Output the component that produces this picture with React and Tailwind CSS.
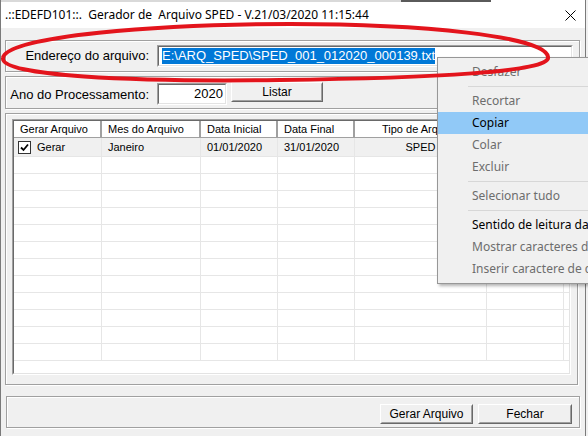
import React from 'react';

const arial = "font-['Liberation_Sans',Arial,sans-serif]";
const segoe = "font-['Noto_Sans','Open_Sans',sans-serif]";

const columns = [
  { w: 'w-[88px]', title: 'Gerar Arquivo' },
  { w: 'w-[99px]', title: 'Mes do Arquivo' },
  { w: 'w-[77px]', title: 'Data Inicial' },
  { w: 'w-[77px]', title: 'Data Final' },
  { w: 'w-[132px]', title: 'Tipo de Arquivo', center: true },
  { w: 'w-[77px]', title: '' },
  { w: 'w-[20px]', title: '' },
];

const menuItems = [
  { label: 'Desfazer', disabled: true },
  { sep: true },
  { label: 'Recortar', disabled: true },
  { label: 'Copiar', active: true },
  { label: 'Colar', disabled: true },
  { label: 'Excluir', disabled: true },
  { sep: true },
  { label: 'Selecionar tudo', disabled: true },
  { sep: true },
  { label: 'Sentido de leitura da direita para a esquerda' },
  { label: 'Mostrar caracteres de controle Unicode', disabled: true },
  { label: 'Inserir caractere de controle Unicode', disabled: true },
];

function Sunken({ className = '', children }) {
  return (
    <div className={`border border-t-[#a0a0a0] border-l-[#a0a0a0] border-r-white border-b-white ${className}`}>
      <div className="h-full w-full border border-t-[#696969] border-l-[#696969] border-r-[#e3e3e3] border-b-[#e3e3e3] bg-white overflow-hidden">
        {children}
      </div>
    </div>
  );
}

function Btn({ className = '', children }) {
  return (
    <div className={`border border-t-white border-l-white border-r-[#696969] border-b-[#696969] bg-[#f0f0f0] ${className}`}>
      <div className={`h-full w-full border border-t-[#f0f0f0] border-l-[#f0f0f0] border-r-[#a0a0a0] border-b-[#a0a0a0] flex items-center justify-center text-[12px] text-black ${arial}`}>
        {children}
      </div>
    </div>
  );
}

function Panel({ className = '', children }) {
  return (
    <div className={`border border-[#a0a0a0] shadow-[inset_1px_1px_0_#fff,1px_1px_0_#fff] ${className}`}>
      {children}
    </div>
  );
}

function Grid() {
  const rows = Array.from({ length: 13 });
  return (
    <Sunken className="ml-[6px] mt-[5px] w-[559px] h-[256px]">
      <div className={`flex h-[17px] border-b border-[#a0a0a0] bg-white text-[11px] text-black ${arial}`}>
        {columns.map((c, i) => (
          <div
            key={i}
            className={`${c.w} shrink-0 h-full flex items-center px-[6px] border-r-2 border-r-[#a0a0a0] whitespace-nowrap overflow-hidden ${c.center ? 'justify-center' : ''}`}
          >
            {c.title}
          </div>
        ))}
      </div>
      {rows.map((_, r) => (
        <div
          key={r}
          className={`flex border-b border-[#e6e6e6] text-[11px] text-black ${arial} ${r === 0 ? 'h-[19px] bg-[#f0f0f0]' : 'h-[17px] bg-white'}`}
        >
          {columns.map((c, i) => (
            <div
              key={i}
              className={`${c.w} shrink-0 h-full flex items-center border-r border-[#e6e6e6] whitespace-nowrap overflow-hidden ${c.center ? 'justify-center' : 'px-[5px]'}`}
            >
              {r === 0 && i === 0 && (
                <div className="flex items-center gap-[6px] -ml-[1px]">
                  <span className="w-[13px] h-[13px] border border-[#333] bg-white flex items-center justify-center">
                    <svg width="9" height="9" viewBox="0 0 9 9">
                      <path d="M1 4.5 L3.5 7 L8 1.5" stroke="#000" strokeWidth="1.8" fill="none" />
                    </svg>
                  </span>
                  <span>Gerar</span>
                </div>
              )}
              {r === 0 && i === 1 && <span className="pl-[1px]">Janeiro</span>}
              {r === 0 && i === 2 && <span className="pl-[1px]">01/01/2020</span>}
              {r === 0 && i === 3 && <span className="pl-[1px]">31/01/2020</span>}
              {r === 0 && i === 4 && <span>SPED</span>}
            </div>
          ))}
        </div>
      ))}
    </Sunken>
  );
}

function ContextMenu() {
  return (
    <div className={`absolute left-[437px] top-[57px] w-[170px] h-[227px] bg-[#f0f0f0] border border-[#979797] shadow-[2px_2px_3px_rgba(0,0,0,0.3)] pt-[3px] text-[12px] ${segoe}`}>
      {menuItems.map((m, i) =>
        m.sep ? (
          <div key={i} className="h-[7px] flex items-center pl-[30px]">
            <div className="h-px w-full bg-[#d7d7d7]" />
          </div>
        ) : (
          <div
            key={i}
            className={`h-[22px] flex items-center pl-[34px] whitespace-nowrap ${m.active ? 'bg-[#91c9f7]' : ''} ${m.disabled ? 'text-[#6d6d6d]' : 'text-black'}`}
          >
            {m.label}
          </div>
        )
      )}
    </div>
  );
}

export default function App() {
  return (
    <div className="relative w-[588px] h-[436px] overflow-hidden bg-[#f0f0f0]">
      <div className="w-[586px] h-full flex flex-col border-l border-r border-[#7a7a7a] bg-[#f0f0f0]">
        <div className="flex h-[2px]">
          <div className="w-[400px] bg-[#d9d9d9]" />
          <div className="w-[90px] bg-[#5a5a5a]" />
          <div className="flex-1 bg-white" />
        </div>
        {/* title bar */}
        <div className={`h-[26px] bg-white flex items-center justify-between pl-[4px] pr-[9px] text-[12px] text-black ${segoe}`}>
          <span className="whitespace-pre">.::EDEFD101::.  Gerador de  Arquivo SPED - V.21/03/2020 11:15:44</span>
          <svg width="11" height="11" viewBox="0 0 11 11">
            <path d="M0.5 0.5 L10.5 10.5 M10.5 0.5 L0.5 10.5" stroke="#000" strokeWidth="1" />
          </svg>
        </div>

        <div className="flex flex-col pl-[4px]">
          <Panel className="mt-[12px] w-[575px] h-[32px] flex items-center">
            <div className={`w-[143px] text-right text-[13px] text-black ${arial}`}>Endereço do arquivo:</div>
            <Sunken className="ml-[8px] w-[416px] h-[22px]">
              <div className={`h-full flex items-center pl-[3px] text-[13px] ${arial}`}>
                <span className="bg-[#0078d7] text-white leading-[16px] whitespace-nowrap">E:\ARQ_SPED\SPED_001_012020_000139.txt</span>
              </div>
            </Sunken>
          </Panel>

          <Panel className="mt-[4px] w-[575px] h-[33px] flex items-start">
            <div className={`w-[143px] mt-[8px] text-right text-[13px] text-black ${arial}`}>Ano do Processamento:</div>
            <Sunken className="ml-[8px] mt-[6px] w-[70px] h-[22px]">
              <div className={`h-full flex items-center justify-end pr-[2px] text-[13px] text-black ${arial}`}>2020</div>
            </Sunken>
            <Btn className="ml-[4px] mt-[5px] w-[92px] h-[20px]">Listar</Btn>
          </Panel>

          <Panel className="mt-[4px] w-[573px] h-[272px]">
            <Grid />
          </Panel>

          <Panel className="mt-[11px] ml-[1px] w-[574px] h-[32px] flex items-center justify-end pr-[7px] gap-[5px]">
            <Btn className="w-[93px] h-[20px] mt-[4px]">Gerar Arquivo</Btn>
            <Btn className="w-[94px] h-[20px] mt-[4px]">Fechar</Btn>
          </Panel>
        </div>
      </div>

      <ContextMenu />

      <svg className="absolute left-0 top-0 pointer-events-none" width="588" height="436" viewBox="0 0 588 436">
        <path
          d="M 548 57 C 546 36, 420 24, 290 24 C 160 24, 6 36, 3 58 C 0 76, 130 82, 280 80 C 430 78, 552 72, 548 57"
          stroke="#e3141c"
          strokeWidth="4"
          fill="none"
          strokeLinecap="round"
        />
      </svg>
    </div>
  );
}
